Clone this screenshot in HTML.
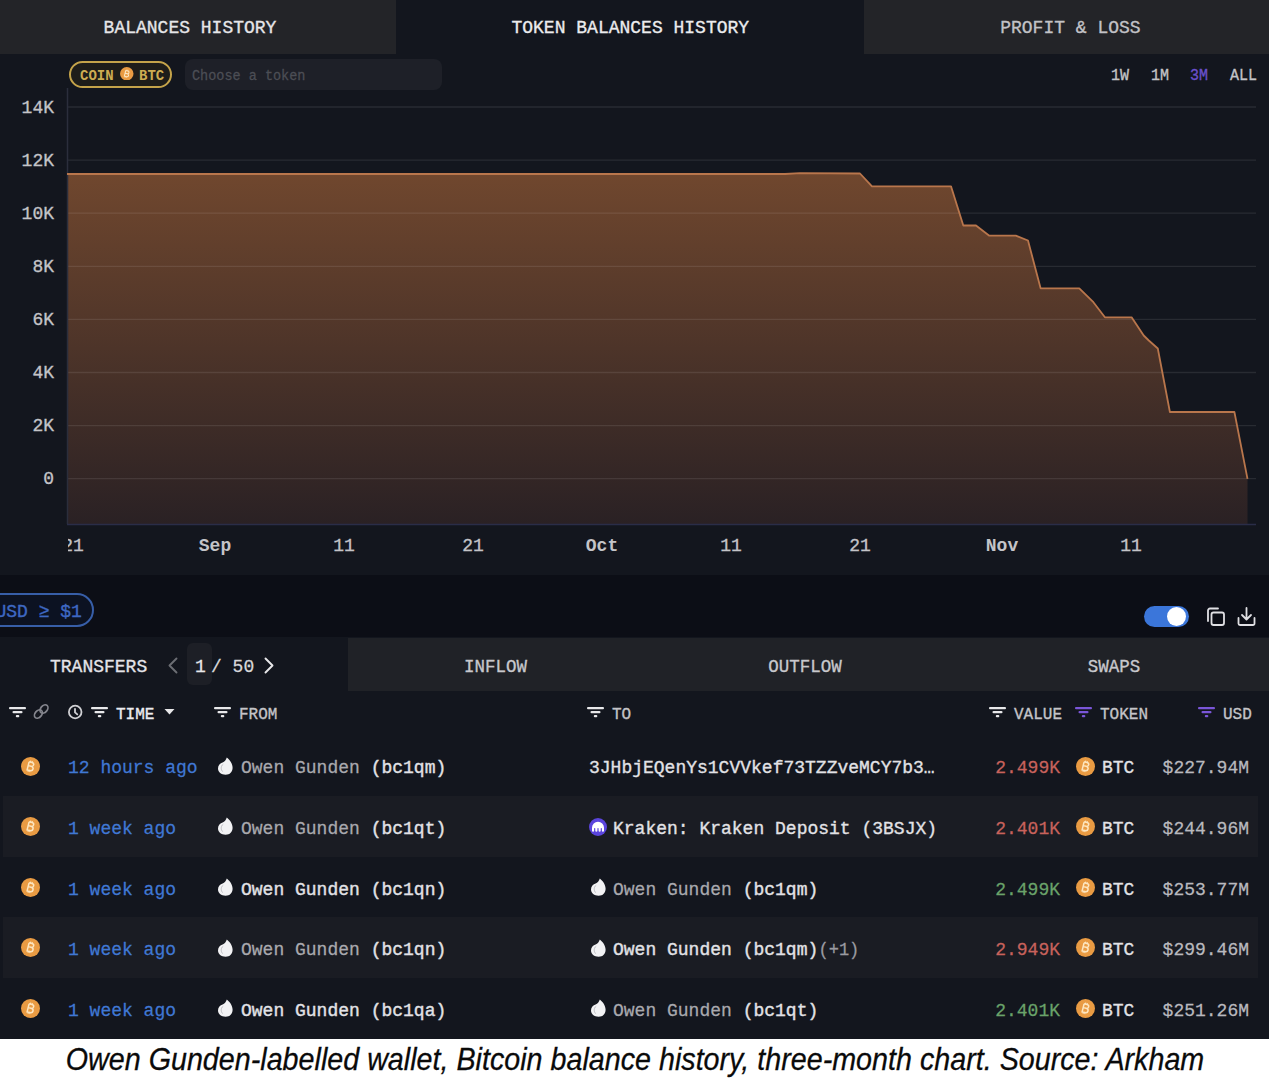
<!DOCTYPE html>
<html><head><meta charset="utf-8"><style>
html,body{margin:0;padding:0}
body{width:1270px;height:1092px;background:#ffffff;position:relative;overflow:hidden;font-family:"Liberation Mono",monospace}
body>div{position:absolute}
.t{white-space:pre;line-height:normal}
</style></head><body>
<div style="left:0px;top:0px;width:1269px;height:1039px;background:#13161e;"></div>
<div style="left:0px;top:0px;width:396px;height:54px;background:#232428;"></div>
<div style="left:864px;top:0px;width:405px;height:54px;background:#232428;"></div>
<div class="t" style="left:-410px;width:1200px;text-align:center;top:18.31px;font-size:18px;color:#e6e6e8;font-weight:400;font-family:'Liberation Mono',monospace;-webkit-text-stroke-width:0.32px;transform:scaleY(1.05);transform-origin:0 14.99px;">BALANCES HISTORY</div>
<div class="t" style="left:30.299999999999955px;width:1200px;text-align:center;top:18.01px;font-size:18px;color:#ececee;font-weight:400;font-family:'Liberation Mono',monospace;-webkit-text-stroke-width:0.32px;transform:scaleY(1.05);transform-origin:0 14.99px;">TOKEN BALANCES HISTORY</div>
<div class="t" style="left:470.4000000000001px;width:1200px;text-align:center;top:18.31px;font-size:18px;color:#c2c2c6;font-weight:400;font-family:'Liberation Mono',monospace;-webkit-text-stroke-width:0.32px;transform:scaleY(1.05);transform-origin:0 14.99px;">PROFIT &amp; LOSS</div>
<div style="left:69px;top:61px;width:99px;height:23px;border:2px solid #c4a34a;border-radius:14px;background:#1e1d1a"></div>
<div class="t" style="left:80px;top:68.14px;font-size:14px;color:#cdac52;font-weight:700;font-family:'Liberation Mono',monospace;-webkit-text-stroke-width:0px;transform:scaleY(1.05);transform-origin:0 11.66px;">COIN</div>
<svg width="13.5" height="13.5" style="position:absolute;left:120.05px;top:66.95px" viewBox="0 0 20 20"><circle cx="10" cy="10" r="10" fill="#e99b43"/><g transform="rotate(14 10 10)"><path d="M7.4 5.6 H10.6 C12 5.6 12.8 6.4 12.8 7.6 C12.8 8.8 12 9.7 10.6 9.7 H7.4 M10.6 9.7 C12.2 9.7 13.2 10.6 13.2 11.9 C13.2 13.3 12.2 14.3 10.6 14.3 H7.4 V5.6" fill="none" stroke="#fde6c0" stroke-width="1.6"/><path d="M8.8 4 V5.6 M10.6 4 V5.6 M8.8 14.3 V16 M10.6 14.3 V16" stroke="#fde6c0" stroke-width="1.1"/></g></svg>
<div class="t" style="left:139px;top:68.14px;font-size:14px;color:#cdac52;font-weight:700;font-family:'Liberation Mono',monospace;-webkit-text-stroke-width:0px;transform:scaleY(1.05);transform-origin:0 11.66px;">BTC</div>
<div style="left:185px;top:59px;width:257px;height:31px;border-radius:8px;background:#1e2028"></div>
<div class="t" style="left:192px;top:68.56px;font-size:13.5px;color:#4c4e55;font-weight:400;font-family:'Liberation Mono',monospace;-webkit-text-stroke-width:0.25px;transform:scaleY(1.05);transform-origin:0 11.24px;">Choose a token</div>
<div class="t" style="left:1111px;top:68.31px;font-size:15px;color:#c4c4c8;font-weight:400;font-family:'Liberation Mono',monospace;-webkit-text-stroke-width:0.32px;transform:scaleY(1.05);transform-origin:0 12.49px;">1W</div>
<div class="t" style="left:1151px;top:68.31px;font-size:15px;color:#c4c4c8;font-weight:400;font-family:'Liberation Mono',monospace;-webkit-text-stroke-width:0.32px;transform:scaleY(1.05);transform-origin:0 12.49px;">1M</div>
<div class="t" style="left:1190px;top:68.31px;font-size:15px;color:#6a50cc;font-weight:400;font-family:'Liberation Mono',monospace;-webkit-text-stroke-width:0.32px;transform:scaleY(1.05);transform-origin:0 12.49px;">3M</div>
<div class="t" style="left:1230px;top:68.31px;font-size:15px;color:#c4c4c8;font-weight:400;font-family:'Liberation Mono',monospace;-webkit-text-stroke-width:0.32px;transform:scaleY(1.05);transform-origin:0 12.49px;">ALL</div>
<svg width="1269" height="575" style="position:absolute;left:0;top:0">
<defs><linearGradient id="g" x1="0" y1="173" x2="0" y2="524" gradientUnits="userSpaceOnUse"><stop offset="0" stop-color="#70472e"/><stop offset="1" stop-color="#2a2124"/></linearGradient></defs>
<path d="M67,174 L785,174 L800,173.2 L860,173.5 L872,186.3 L951,186.3 L963.3,225.5 L976,225.5 L989.3,235.7 L1015.8,235.7 L1028,240.5 L1040.6,288.3 L1079.3,288.3 L1093.4,302.2 L1104.9,317.3 L1131.6,317.3 L1143.7,335.5 L1148.8,340.5 L1157.8,348.5 L1169.9,412 L1234.4,412 L1247.5,478.8 L1247.5,524 L67,524 Z" fill="url(#g)"/>
<line x1="67" y1="107.0" x2="1256" y2="107.0" stroke="#ffffff" stroke-opacity="0.09" stroke-width="1.3"/>
<line x1="67" y1="160.1" x2="1256" y2="160.1" stroke="#ffffff" stroke-opacity="0.09" stroke-width="1.3"/>
<line x1="67" y1="213.2" x2="1256" y2="213.2" stroke="#ffffff" stroke-opacity="0.09" stroke-width="1.3"/>
<line x1="67" y1="266.3" x2="1256" y2="266.3" stroke="#ffffff" stroke-opacity="0.09" stroke-width="1.3"/>
<line x1="67" y1="319.4" x2="1256" y2="319.4" stroke="#ffffff" stroke-opacity="0.09" stroke-width="1.3"/>
<line x1="67" y1="372.5" x2="1256" y2="372.5" stroke="#ffffff" stroke-opacity="0.09" stroke-width="1.3"/>
<line x1="67" y1="425.6" x2="1256" y2="425.6" stroke="#ffffff" stroke-opacity="0.09" stroke-width="1.3"/>
<line x1="67" y1="478.7" x2="1256" y2="478.7" stroke="#ffffff" stroke-opacity="0.09" stroke-width="1.3"/>
<line x1="67.5" y1="88" x2="67.5" y2="524" stroke="#2b2e3c" stroke-width="1.5"/>
<line x1="67" y1="524.5" x2="1256" y2="524.5" stroke="#2a2d48" stroke-width="1.5"/>
<path d="M67,174 L785,174 L800,173.2 L860,173.5 L872,186.3 L951,186.3 L963.3,225.5 L976,225.5 L989.3,235.7 L1015.8,235.7 L1028,240.5 L1040.6,288.3 L1079.3,288.3 L1093.4,302.2 L1104.9,317.3 L1131.6,317.3 L1143.7,335.5 L1148.8,340.5 L1157.8,348.5 L1169.9,412 L1234.4,412 L1247.5,478.8" fill="none" stroke="#b9764c" stroke-width="1.8" stroke-linejoin="round"/>
</svg>
<div class="t" style="left:-1146px;width:1200px;text-align:right;top:97.51px;font-size:18px;color:#c4c4c8;font-weight:400;font-family:'Liberation Mono',monospace;-webkit-text-stroke-width:0.32px;transform:scaleY(1.05);transform-origin:0 14.99px;">14K</div>
<div class="t" style="left:-1146px;width:1200px;text-align:right;top:150.61px;font-size:18px;color:#c4c4c8;font-weight:400;font-family:'Liberation Mono',monospace;-webkit-text-stroke-width:0.32px;transform:scaleY(1.05);transform-origin:0 14.99px;">12K</div>
<div class="t" style="left:-1146px;width:1200px;text-align:right;top:203.71px;font-size:18px;color:#c4c4c8;font-weight:400;font-family:'Liberation Mono',monospace;-webkit-text-stroke-width:0.32px;transform:scaleY(1.05);transform-origin:0 14.99px;">10K</div>
<div class="t" style="left:-1146px;width:1200px;text-align:right;top:256.81px;font-size:18px;color:#c4c4c8;font-weight:400;font-family:'Liberation Mono',monospace;-webkit-text-stroke-width:0.32px;transform:scaleY(1.05);transform-origin:0 14.99px;">8K</div>
<div class="t" style="left:-1146px;width:1200px;text-align:right;top:309.91px;font-size:18px;color:#c4c4c8;font-weight:400;font-family:'Liberation Mono',monospace;-webkit-text-stroke-width:0.32px;transform:scaleY(1.05);transform-origin:0 14.99px;">6K</div>
<div class="t" style="left:-1146px;width:1200px;text-align:right;top:363.01px;font-size:18px;color:#c4c4c8;font-weight:400;font-family:'Liberation Mono',monospace;-webkit-text-stroke-width:0.32px;transform:scaleY(1.05);transform-origin:0 14.99px;">4K</div>
<div class="t" style="left:-1146px;width:1200px;text-align:right;top:416.11px;font-size:18px;color:#c4c4c8;font-weight:400;font-family:'Liberation Mono',monospace;-webkit-text-stroke-width:0.32px;transform:scaleY(1.05);transform-origin:0 14.99px;">2K</div>
<div class="t" style="left:-1146px;width:1200px;text-align:right;top:469.21px;font-size:18px;color:#c4c4c8;font-weight:400;font-family:'Liberation Mono',monospace;-webkit-text-stroke-width:0.32px;transform:scaleY(1.05);transform-origin:0 14.99px;">0</div>
<div class="t" style="left:-527px;width:1200px;text-align:center;top:536.21px;font-size:18px;color:#c4c4c8;font-weight:400;font-family:'Liberation Mono',monospace;-webkit-text-stroke-width:0.32px;transform:scaleY(1.05);transform-origin:0 14.99px;">21</div>
<div class="t" style="left:-385px;width:1200px;text-align:center;top:536.21px;font-size:18px;color:#c4c4c8;font-weight:700;font-family:'Liberation Mono',monospace;-webkit-text-stroke-width:0px;transform:scaleY(1.05);transform-origin:0 14.99px;">Sep</div>
<div class="t" style="left:-256px;width:1200px;text-align:center;top:536.21px;font-size:18px;color:#c4c4c8;font-weight:400;font-family:'Liberation Mono',monospace;-webkit-text-stroke-width:0.32px;transform:scaleY(1.05);transform-origin:0 14.99px;">11</div>
<div class="t" style="left:-127px;width:1200px;text-align:center;top:536.21px;font-size:18px;color:#c4c4c8;font-weight:400;font-family:'Liberation Mono',monospace;-webkit-text-stroke-width:0.32px;transform:scaleY(1.05);transform-origin:0 14.99px;">21</div>
<div class="t" style="left:2px;width:1200px;text-align:center;top:536.21px;font-size:18px;color:#c4c4c8;font-weight:700;font-family:'Liberation Mono',monospace;-webkit-text-stroke-width:0px;transform:scaleY(1.05);transform-origin:0 14.99px;">Oct</div>
<div class="t" style="left:131px;width:1200px;text-align:center;top:536.21px;font-size:18px;color:#c4c4c8;font-weight:400;font-family:'Liberation Mono',monospace;-webkit-text-stroke-width:0.32px;transform:scaleY(1.05);transform-origin:0 14.99px;">11</div>
<div class="t" style="left:260px;width:1200px;text-align:center;top:536.21px;font-size:18px;color:#c4c4c8;font-weight:400;font-family:'Liberation Mono',monospace;-webkit-text-stroke-width:0.32px;transform:scaleY(1.05);transform-origin:0 14.99px;">21</div>
<div class="t" style="left:402px;width:1200px;text-align:center;top:536.21px;font-size:18px;color:#c4c4c8;font-weight:700;font-family:'Liberation Mono',monospace;-webkit-text-stroke-width:0px;transform:scaleY(1.05);transform-origin:0 14.99px;">Nov</div>
<div class="t" style="left:531px;width:1200px;text-align:center;top:536.21px;font-size:18px;color:#c4c4c8;font-weight:400;font-family:'Liberation Mono',monospace;-webkit-text-stroke-width:0.32px;transform:scaleY(1.05);transform-origin:0 14.99px;">11</div>
<div style="left:0px;top:530px;width:68px;height:30px;background:#13161e;"></div>
<div style="left:0px;top:575px;width:1269px;height:62px;background:#0c0e16;"></div>
<div style="left:-30px;top:593px;width:120px;height:30px;border:2px solid #375ea8;border-radius:17px;background:#0c1222"></div>
<div class="t" style="left:0px;top:602.01px;font-size:18px;color:#3e68c2;font-weight:400;font-family:'Liberation Mono',monospace;-webkit-text-stroke-width:0.38px;transform:scaleY(1.05);transform-origin:0 14.99px;left:-4.5px">USD &ge; $1</div>
<div style="left:1144px;top:606px;width:45px;height:21px;border-radius:11px;background:#3b76da"></div>
<div style="left:1166.5px;top:607px;width:19px;height:19px;border-radius:50%;background:#fff"></div>
<svg width="60" height="30" style="position:absolute;left:1200px;top:602px" fill="none" stroke="#e0e0e4" stroke-width="1.8" stroke-linecap="round" stroke-linejoin="round">
<rect x="11.5" y="10.5" width="12.5" height="12.5" rx="2"/>
<path d="M8 19 V8.5 a2 2 0 0 1 2 -2 H18"/>
<path d="M46.5 6 V17 M42 13 L46.5 17.5 L51 13"/>
<path d="M38.5 16 V21.5 a1.5 1.5 0 0 0 1.5 1.5 H53 a1.5 1.5 0 0 0 1.5 -1.5 V16"/>
</svg>
<div style="left:348px;top:638px;width:921px;height:53px;background:#202227;"></div>
<div class="t" style="left:50px;top:657.01px;font-size:18px;color:#e4e4e8;font-weight:400;font-family:'Liberation Mono',monospace;-webkit-text-stroke-width:0.32px;transform:scaleY(1.05);transform-origin:0 14.99px;">TRANSFERS</div>
<svg width="12" height="18" style="position:absolute;left:167px;top:657px" fill="none" stroke="#6c6e74" stroke-width="1.9" stroke-linecap="round" stroke-linejoin="round"><path d="M9.5 1.5 L2.5 8.5 L9.5 15.5"/></svg>
<div style="left:187px;top:643px;width:25px;height:42px;border-radius:6px;background:#1d1f26"></div>
<div class="t" style="left:195px;top:657.01px;font-size:18px;color:#e8e8ea;font-weight:400;font-family:'Liberation Mono',monospace;-webkit-text-stroke-width:0.25px;transform:scaleY(1.05);transform-origin:0 14.99px;">1</div>
<div class="t" style="left:211px;top:657.01px;font-size:18px;color:#d8d8da;font-weight:400;font-family:'Liberation Mono',monospace;-webkit-text-stroke-width:0.25px;transform:scaleY(1.05);transform-origin:0 14.99px;">/ 50</div>
<svg width="12" height="18" style="position:absolute;left:263px;top:657px" fill="none" stroke="#e8e8ea" stroke-width="1.9" stroke-linecap="round" stroke-linejoin="round"><path d="M2.5 1.5 L9.5 8.5 L2.5 15.5"/></svg>
<div class="t" style="left:-104.5px;width:1200px;text-align:center;top:657.43px;font-size:17.5px;color:#c8c8cc;font-weight:400;font-family:'Liberation Mono',monospace;-webkit-text-stroke-width:0.32px;transform:scaleY(1.05);transform-origin:0 14.57px;">INFLOW</div>
<div class="t" style="left:205px;width:1200px;text-align:center;top:657.43px;font-size:17.5px;color:#c8c8cc;font-weight:400;font-family:'Liberation Mono',monospace;-webkit-text-stroke-width:0.32px;transform:scaleY(1.05);transform-origin:0 14.57px;">OUTFLOW</div>
<div class="t" style="left:514px;width:1200px;text-align:center;top:657.43px;font-size:17.5px;color:#c8c8cc;font-weight:400;font-family:'Liberation Mono',monospace;-webkit-text-stroke-width:0.32px;transform:scaleY(1.05);transform-origin:0 14.57px;">SWAPS</div>
<svg width="18" height="12" style="position:absolute;left:9px;top:707px" fill="#e8e8ea"><rect x="0" y="0" width="17" height="2.2" rx="1"/><rect x="3.5" y="4" width="10" height="2.2" rx="1"/><rect x="6.8" y="8" width="3.5" height="2.2" rx="1"/></svg>
<svg width="22" height="22" style="position:absolute;left:30px;top:701px" fill="none" stroke="#85868e" stroke-width="1.7"><ellipse cx="8.4" cy="13" rx="3.3" ry="4.7" transform="rotate(40 8.4 13)"/><ellipse cx="14" cy="8" rx="3.3" ry="4.7" transform="rotate(40 14 8)"/></svg>
<svg width="16" height="16" style="position:absolute;left:67px;top:704px" fill="none" stroke="#d0d0d4" stroke-width="1.8" stroke-linecap="round"><circle cx="8.2" cy="8" r="6.3"/><path d="M8 4.8 V8.3 L10.3 10.4"/></svg>
<svg width="18" height="12" style="position:absolute;left:91px;top:707px" fill="#e8e8ea"><rect x="0" y="0" width="17" height="2.2" rx="1"/><rect x="3.5" y="4" width="10" height="2.2" rx="1"/><rect x="6.8" y="8" width="3.5" height="2.2" rx="1"/></svg>
<div class="t" style="left:116px;top:705.68px;font-size:16px;color:#ececf0;font-weight:400;font-family:'Liberation Mono',monospace;-webkit-text-stroke-width:0.38px;transform:scaleY(1.05);transform-origin:0 13.32px;">TIME</div>
<svg width="12" height="8" style="position:absolute;left:164px;top:708px"><path d="M0.5 1 L10.5 1 L5.5 6.5 Z" fill="#e8e8ea"/></svg>
<svg width="18" height="12" style="position:absolute;left:214px;top:707px" fill="#e8e8ea"><rect x="0" y="0" width="17" height="2.2" rx="1"/><rect x="3.5" y="4" width="10" height="2.2" rx="1"/><rect x="6.8" y="8" width="3.5" height="2.2" rx="1"/></svg>
<div class="t" style="left:239px;top:705.68px;font-size:16px;color:#c4c4c8;font-weight:400;font-family:'Liberation Mono',monospace;-webkit-text-stroke-width:0.32px;transform:scaleY(1.05);transform-origin:0 13.32px;">FROM</div>
<svg width="18" height="12" style="position:absolute;left:587px;top:707px" fill="#e8e8ea"><rect x="0" y="0" width="17" height="2.2" rx="1"/><rect x="3.5" y="4" width="10" height="2.2" rx="1"/><rect x="6.8" y="8" width="3.5" height="2.2" rx="1"/></svg>
<div class="t" style="left:612px;top:705.68px;font-size:16px;color:#c4c4c8;font-weight:400;font-family:'Liberation Mono',monospace;-webkit-text-stroke-width:0.32px;transform:scaleY(1.05);transform-origin:0 13.32px;">TO</div>
<svg width="18" height="12" style="position:absolute;left:989px;top:707px" fill="#e8e8ea"><rect x="0" y="0" width="17" height="2.2" rx="1"/><rect x="3.5" y="4" width="10" height="2.2" rx="1"/><rect x="6.8" y="8" width="3.5" height="2.2" rx="1"/></svg>
<div class="t" style="left:1014px;top:705.68px;font-size:16px;color:#c4c4c8;font-weight:400;font-family:'Liberation Mono',monospace;-webkit-text-stroke-width:0.32px;transform:scaleY(1.05);transform-origin:0 13.32px;">VALUE</div>
<svg width="18" height="12" style="position:absolute;left:1075px;top:707px" fill="#7a56d8"><rect x="0" y="0" width="17" height="2.2" rx="1"/><rect x="3.5" y="4" width="10" height="2.2" rx="1"/><rect x="6.8" y="8" width="3.5" height="2.2" rx="1"/></svg>
<div class="t" style="left:1100px;top:705.68px;font-size:16px;color:#c4c4c8;font-weight:400;font-family:'Liberation Mono',monospace;-webkit-text-stroke-width:0.32px;transform:scaleY(1.05);transform-origin:0 13.32px;">TOKEN</div>
<svg width="18" height="12" style="position:absolute;left:1198px;top:707px" fill="#7a56d8"><rect x="0" y="0" width="17" height="2.2" rx="1"/><rect x="3.5" y="4" width="10" height="2.2" rx="1"/><rect x="6.8" y="8" width="3.5" height="2.2" rx="1"/></svg>
<div class="t" style="left:1223px;top:705.68px;font-size:16px;color:#c4c4c8;font-weight:400;font-family:'Liberation Mono',monospace;-webkit-text-stroke-width:0.32px;transform:scaleY(1.05);transform-origin:0 13.32px;">USD</div>
<div style="left:3px;top:796px;width:1255px;height:61px;background:#1a1c23;"></div>
<div style="left:3px;top:917px;width:1255px;height:61px;background:#1a1c23;"></div>
<svg width="19" height="19" style="position:absolute;left:21.2px;top:756.5px" viewBox="0 0 20 20"><circle cx="10" cy="10" r="10" fill="#e99b43"/><g transform="rotate(14 10 10)"><path d="M7.4 5.6 H10.6 C12 5.6 12.8 6.4 12.8 7.6 C12.8 8.8 12 9.7 10.6 9.7 H7.4 M10.6 9.7 C12.2 9.7 13.2 10.6 13.2 11.9 C13.2 13.3 12.2 14.3 10.6 14.3 H7.4 V5.6" fill="none" stroke="#fde6c0" stroke-width="1.6"/><path d="M8.8 4 V5.6 M10.6 4 V5.6 M8.8 14.3 V16 M10.6 14.3 V16" stroke="#fde6c0" stroke-width="1.1"/></g></svg>
<div class="t" style="left:68px;top:758.41px;font-size:18px;color:#4078d4;font-weight:400;font-family:'Liberation Mono',monospace;-webkit-text-stroke-width:0.25px;transform:scaleY(1.05);transform-origin:0 14.99px;">12 hours ago</div>
<svg width="17" height="19" style="position:absolute;left:216.5px;top:757.0px" viewBox="0 0 17 19"><path d="M9.8 0.6 C12.6 2.8 15.6 6.6 15.6 10.8 C15.6 15 12.8 17.8 8.6 17.8 C4.2 17.8 1 15.2 1 11.6 C1 8.4 3.2 6.4 5.6 5.6 C7.6 4.9 8.9 3.2 9.8 0.6 Z" fill="#f2f2f4"/><path d="M6.2 7.2 C3.9 8.8 3.5 12.2 5.6 14.6" stroke="#bdbdc2" stroke-width="1" fill="none"/></svg>
<div class="t" style="left:241px;top:758.41px;font-size:18px;color:#a9a9ae;font-weight:400;font-family:'Liberation Mono',monospace;-webkit-text-stroke-width:0.25px;transform:scaleY(1.05);transform-origin:0 14.99px;white-space:pre"><span style="color:#a9a9ae;-webkit-text-stroke-width:0.25px">Owen Gunden </span><span style="color:#e2e2e6;-webkit-text-stroke-width:0.38px">(bc1qm)</span></div>
<div class="t" style="left:589px;top:758.41px;font-size:18px;color:#e2e2e6;font-weight:400;font-family:'Liberation Mono',monospace;-webkit-text-stroke-width:0.32px;transform:scaleY(1.05);transform-origin:0 14.99px;">3JHbjEQenYs1CVVkef73TZZveMCY7b3…</div>
<div class="t" style="left:-140px;width:1200px;text-align:right;top:758.41px;font-size:18px;color:#c8625c;font-weight:400;font-family:'Liberation Mono',monospace;-webkit-text-stroke-width:0.25px;transform:scaleY(1.05);transform-origin:0 14.99px;">2.499K</div>
<svg width="19" height="19" style="position:absolute;left:1076.0px;top:756.5px" viewBox="0 0 20 20"><circle cx="10" cy="10" r="10" fill="#e99b43"/><g transform="rotate(14 10 10)"><path d="M7.4 5.6 H10.6 C12 5.6 12.8 6.4 12.8 7.6 C12.8 8.8 12 9.7 10.6 9.7 H7.4 M10.6 9.7 C12.2 9.7 13.2 10.6 13.2 11.9 C13.2 13.3 12.2 14.3 10.6 14.3 H7.4 V5.6" fill="none" stroke="#fde6c0" stroke-width="1.6"/><path d="M8.8 4 V5.6 M10.6 4 V5.6 M8.8 14.3 V16 M10.6 14.3 V16" stroke="#fde6c0" stroke-width="1.1"/></g></svg>
<div class="t" style="left:1102px;top:758.41px;font-size:18px;color:#e2e2e6;font-weight:400;font-family:'Liberation Mono',monospace;-webkit-text-stroke-width:0.32px;transform:scaleY(1.05);transform-origin:0 14.99px;">BTC</div>
<div class="t" style="left:49px;width:1200px;text-align:right;top:758.41px;font-size:18px;color:#b9b9be;font-weight:400;font-family:'Liberation Mono',monospace;-webkit-text-stroke-width:0.25px;transform:scaleY(1.05);transform-origin:0 14.99px;">$227.94M</div>
<svg width="19" height="19" style="position:absolute;left:21.2px;top:816.9px" viewBox="0 0 20 20"><circle cx="10" cy="10" r="10" fill="#e99b43"/><g transform="rotate(14 10 10)"><path d="M7.4 5.6 H10.6 C12 5.6 12.8 6.4 12.8 7.6 C12.8 8.8 12 9.7 10.6 9.7 H7.4 M10.6 9.7 C12.2 9.7 13.2 10.6 13.2 11.9 C13.2 13.3 12.2 14.3 10.6 14.3 H7.4 V5.6" fill="none" stroke="#fde6c0" stroke-width="1.6"/><path d="M8.8 4 V5.6 M10.6 4 V5.6 M8.8 14.3 V16 M10.6 14.3 V16" stroke="#fde6c0" stroke-width="1.1"/></g></svg>
<div class="t" style="left:68px;top:818.81px;font-size:18px;color:#4078d4;font-weight:400;font-family:'Liberation Mono',monospace;-webkit-text-stroke-width:0.25px;transform:scaleY(1.05);transform-origin:0 14.99px;">1 week ago</div>
<svg width="17" height="19" style="position:absolute;left:216.5px;top:817.4px" viewBox="0 0 17 19"><path d="M9.8 0.6 C12.6 2.8 15.6 6.6 15.6 10.8 C15.6 15 12.8 17.8 8.6 17.8 C4.2 17.8 1 15.2 1 11.6 C1 8.4 3.2 6.4 5.6 5.6 C7.6 4.9 8.9 3.2 9.8 0.6 Z" fill="#f2f2f4"/><path d="M6.2 7.2 C3.9 8.8 3.5 12.2 5.6 14.6" stroke="#bdbdc2" stroke-width="1" fill="none"/></svg>
<div class="t" style="left:241px;top:818.81px;font-size:18px;color:#a9a9ae;font-weight:400;font-family:'Liberation Mono',monospace;-webkit-text-stroke-width:0.25px;transform:scaleY(1.05);transform-origin:0 14.99px;white-space:pre"><span style="color:#a9a9ae;-webkit-text-stroke-width:0.25px">Owen Gunden </span><span style="color:#e2e2e6;-webkit-text-stroke-width:0.38px">(bc1qt)</span></div>
<svg width="18" height="18" style="position:absolute;left:588.8px;top:817.6999999999999px" viewBox="0 0 18 18"><circle cx="9" cy="9" r="9" fill="#5b45dd"/><path d="M3 12.8 V9.8 A6 6 0 0 1 15 9.8 V12.8 a1.05 1.05 0 0 1 -2.1 0 V10.6 a0.6 0.6 0 0 0 -1.2 0 V12.8 a1.05 1.05 0 0 1 -2.1 0 V10.6 a0.6 0.6 0 0 0 -1.2 0 V12.8 a1.05 1.05 0 0 1 -2.1 0 V10.6 a0.6 0.6 0 0 0 -1.2 0 V12.8 a1.05 1.05 0 0 1 -2.1 0 Z" fill="#fff"/></svg>
<div class="t" style="left:613px;top:818.81px;font-size:18px;color:#e2e2e6;font-weight:400;font-family:'Liberation Mono',monospace;-webkit-text-stroke-width:0.32px;transform:scaleY(1.05);transform-origin:0 14.99px;">Kraken: Kraken Deposit (3BSJX)</div>
<div class="t" style="left:-140px;width:1200px;text-align:right;top:818.81px;font-size:18px;color:#c8625c;font-weight:400;font-family:'Liberation Mono',monospace;-webkit-text-stroke-width:0.25px;transform:scaleY(1.05);transform-origin:0 14.99px;">2.401K</div>
<svg width="19" height="19" style="position:absolute;left:1076.0px;top:816.9px" viewBox="0 0 20 20"><circle cx="10" cy="10" r="10" fill="#e99b43"/><g transform="rotate(14 10 10)"><path d="M7.4 5.6 H10.6 C12 5.6 12.8 6.4 12.8 7.6 C12.8 8.8 12 9.7 10.6 9.7 H7.4 M10.6 9.7 C12.2 9.7 13.2 10.6 13.2 11.9 C13.2 13.3 12.2 14.3 10.6 14.3 H7.4 V5.6" fill="none" stroke="#fde6c0" stroke-width="1.6"/><path d="M8.8 4 V5.6 M10.6 4 V5.6 M8.8 14.3 V16 M10.6 14.3 V16" stroke="#fde6c0" stroke-width="1.1"/></g></svg>
<div class="t" style="left:1102px;top:818.81px;font-size:18px;color:#e2e2e6;font-weight:400;font-family:'Liberation Mono',monospace;-webkit-text-stroke-width:0.32px;transform:scaleY(1.05);transform-origin:0 14.99px;">BTC</div>
<div class="t" style="left:49px;width:1200px;text-align:right;top:818.81px;font-size:18px;color:#b9b9be;font-weight:400;font-family:'Liberation Mono',monospace;-webkit-text-stroke-width:0.25px;transform:scaleY(1.05);transform-origin:0 14.99px;">$244.96M</div>
<svg width="19" height="19" style="position:absolute;left:21.2px;top:877.6px" viewBox="0 0 20 20"><circle cx="10" cy="10" r="10" fill="#e99b43"/><g transform="rotate(14 10 10)"><path d="M7.4 5.6 H10.6 C12 5.6 12.8 6.4 12.8 7.6 C12.8 8.8 12 9.7 10.6 9.7 H7.4 M10.6 9.7 C12.2 9.7 13.2 10.6 13.2 11.9 C13.2 13.3 12.2 14.3 10.6 14.3 H7.4 V5.6" fill="none" stroke="#fde6c0" stroke-width="1.6"/><path d="M8.8 4 V5.6 M10.6 4 V5.6 M8.8 14.3 V16 M10.6 14.3 V16" stroke="#fde6c0" stroke-width="1.1"/></g></svg>
<div class="t" style="left:68px;top:879.51px;font-size:18px;color:#4078d4;font-weight:400;font-family:'Liberation Mono',monospace;-webkit-text-stroke-width:0.25px;transform:scaleY(1.05);transform-origin:0 14.99px;">1 week ago</div>
<svg width="17" height="19" style="position:absolute;left:216.5px;top:878.1px" viewBox="0 0 17 19"><path d="M9.8 0.6 C12.6 2.8 15.6 6.6 15.6 10.8 C15.6 15 12.8 17.8 8.6 17.8 C4.2 17.8 1 15.2 1 11.6 C1 8.4 3.2 6.4 5.6 5.6 C7.6 4.9 8.9 3.2 9.8 0.6 Z" fill="#f2f2f4"/><path d="M6.2 7.2 C3.9 8.8 3.5 12.2 5.6 14.6" stroke="#bdbdc2" stroke-width="1" fill="none"/></svg>
<div class="t" style="left:241px;top:879.51px;font-size:18px;color:#a9a9ae;font-weight:400;font-family:'Liberation Mono',monospace;-webkit-text-stroke-width:0.25px;transform:scaleY(1.05);transform-origin:0 14.99px;white-space:pre"><span style="color:#e2e2e6;-webkit-text-stroke-width:0.38px">Owen Gunden </span><span style="color:#e2e2e6;-webkit-text-stroke-width:0.38px">(bc1qn)</span></div>
<svg width="17" height="19" style="position:absolute;left:589.5px;top:878.1px" viewBox="0 0 17 19"><path d="M9.8 0.6 C12.6 2.8 15.6 6.6 15.6 10.8 C15.6 15 12.8 17.8 8.6 17.8 C4.2 17.8 1 15.2 1 11.6 C1 8.4 3.2 6.4 5.6 5.6 C7.6 4.9 8.9 3.2 9.8 0.6 Z" fill="#f2f2f4"/><path d="M6.2 7.2 C3.9 8.8 3.5 12.2 5.6 14.6" stroke="#bdbdc2" stroke-width="1" fill="none"/></svg>
<div class="t" style="left:613px;top:879.51px;font-size:18px;color:#a9a9ae;font-weight:400;font-family:'Liberation Mono',monospace;-webkit-text-stroke-width:0.25px;transform:scaleY(1.05);transform-origin:0 14.99px;white-space:pre"><span style="color:#a9a9ae;-webkit-text-stroke-width:0.25px">Owen Gunden </span><span style="color:#e2e2e6;-webkit-text-stroke-width:0.38px">(bc1qm)</span></div>
<div class="t" style="left:-140px;width:1200px;text-align:right;top:879.51px;font-size:18px;color:#6aa36a;font-weight:400;font-family:'Liberation Mono',monospace;-webkit-text-stroke-width:0.25px;transform:scaleY(1.05);transform-origin:0 14.99px;">2.499K</div>
<svg width="19" height="19" style="position:absolute;left:1076.0px;top:877.6px" viewBox="0 0 20 20"><circle cx="10" cy="10" r="10" fill="#e99b43"/><g transform="rotate(14 10 10)"><path d="M7.4 5.6 H10.6 C12 5.6 12.8 6.4 12.8 7.6 C12.8 8.8 12 9.7 10.6 9.7 H7.4 M10.6 9.7 C12.2 9.7 13.2 10.6 13.2 11.9 C13.2 13.3 12.2 14.3 10.6 14.3 H7.4 V5.6" fill="none" stroke="#fde6c0" stroke-width="1.6"/><path d="M8.8 4 V5.6 M10.6 4 V5.6 M8.8 14.3 V16 M10.6 14.3 V16" stroke="#fde6c0" stroke-width="1.1"/></g></svg>
<div class="t" style="left:1102px;top:879.51px;font-size:18px;color:#e2e2e6;font-weight:400;font-family:'Liberation Mono',monospace;-webkit-text-stroke-width:0.32px;transform:scaleY(1.05);transform-origin:0 14.99px;">BTC</div>
<div class="t" style="left:49px;width:1200px;text-align:right;top:879.51px;font-size:18px;color:#b9b9be;font-weight:400;font-family:'Liberation Mono',monospace;-webkit-text-stroke-width:0.25px;transform:scaleY(1.05);transform-origin:0 14.99px;">$253.77M</div>
<svg width="19" height="19" style="position:absolute;left:21.2px;top:938.0px" viewBox="0 0 20 20"><circle cx="10" cy="10" r="10" fill="#e99b43"/><g transform="rotate(14 10 10)"><path d="M7.4 5.6 H10.6 C12 5.6 12.8 6.4 12.8 7.6 C12.8 8.8 12 9.7 10.6 9.7 H7.4 M10.6 9.7 C12.2 9.7 13.2 10.6 13.2 11.9 C13.2 13.3 12.2 14.3 10.6 14.3 H7.4 V5.6" fill="none" stroke="#fde6c0" stroke-width="1.6"/><path d="M8.8 4 V5.6 M10.6 4 V5.6 M8.8 14.3 V16 M10.6 14.3 V16" stroke="#fde6c0" stroke-width="1.1"/></g></svg>
<div class="t" style="left:68px;top:939.91px;font-size:18px;color:#4078d4;font-weight:400;font-family:'Liberation Mono',monospace;-webkit-text-stroke-width:0.25px;transform:scaleY(1.05);transform-origin:0 14.99px;">1 week ago</div>
<svg width="17" height="19" style="position:absolute;left:216.5px;top:938.5px" viewBox="0 0 17 19"><path d="M9.8 0.6 C12.6 2.8 15.6 6.6 15.6 10.8 C15.6 15 12.8 17.8 8.6 17.8 C4.2 17.8 1 15.2 1 11.6 C1 8.4 3.2 6.4 5.6 5.6 C7.6 4.9 8.9 3.2 9.8 0.6 Z" fill="#f2f2f4"/><path d="M6.2 7.2 C3.9 8.8 3.5 12.2 5.6 14.6" stroke="#bdbdc2" stroke-width="1" fill="none"/></svg>
<div class="t" style="left:241px;top:939.91px;font-size:18px;color:#a9a9ae;font-weight:400;font-family:'Liberation Mono',monospace;-webkit-text-stroke-width:0.25px;transform:scaleY(1.05);transform-origin:0 14.99px;white-space:pre"><span style="color:#a9a9ae;-webkit-text-stroke-width:0.25px">Owen Gunden </span><span style="color:#e2e2e6;-webkit-text-stroke-width:0.38px">(bc1qn)</span></div>
<svg width="17" height="19" style="position:absolute;left:589.5px;top:938.5px" viewBox="0 0 17 19"><path d="M9.8 0.6 C12.6 2.8 15.6 6.6 15.6 10.8 C15.6 15 12.8 17.8 8.6 17.8 C4.2 17.8 1 15.2 1 11.6 C1 8.4 3.2 6.4 5.6 5.6 C7.6 4.9 8.9 3.2 9.8 0.6 Z" fill="#f2f2f4"/><path d="M6.2 7.2 C3.9 8.8 3.5 12.2 5.6 14.6" stroke="#bdbdc2" stroke-width="1" fill="none"/></svg>
<div class="t" style="left:613px;top:939.91px;font-size:18px;color:#a9a9ae;font-weight:400;font-family:'Liberation Mono',monospace;-webkit-text-stroke-width:0.25px;transform:scaleY(1.05);transform-origin:0 14.99px;white-space:pre"><span style="color:#e2e2e6;-webkit-text-stroke-width:0.38px">Owen Gunden </span><span style="color:#e2e2e6;-webkit-text-stroke-width:0.38px">(bc1qm)</span></div>
<div class="t" style="left:818.5px;top:940.75px;font-size:17px;color:#9a9aa0;font-weight:400;font-family:'Liberation Mono',monospace;-webkit-text-stroke-width:0.25px;transform:scaleY(1.05);transform-origin:0 14.15px;">(+1)</div>
<div class="t" style="left:-140px;width:1200px;text-align:right;top:939.91px;font-size:18px;color:#c8625c;font-weight:400;font-family:'Liberation Mono',monospace;-webkit-text-stroke-width:0.25px;transform:scaleY(1.05);transform-origin:0 14.99px;">2.949K</div>
<svg width="19" height="19" style="position:absolute;left:1076.0px;top:938.0px" viewBox="0 0 20 20"><circle cx="10" cy="10" r="10" fill="#e99b43"/><g transform="rotate(14 10 10)"><path d="M7.4 5.6 H10.6 C12 5.6 12.8 6.4 12.8 7.6 C12.8 8.8 12 9.7 10.6 9.7 H7.4 M10.6 9.7 C12.2 9.7 13.2 10.6 13.2 11.9 C13.2 13.3 12.2 14.3 10.6 14.3 H7.4 V5.6" fill="none" stroke="#fde6c0" stroke-width="1.6"/><path d="M8.8 4 V5.6 M10.6 4 V5.6 M8.8 14.3 V16 M10.6 14.3 V16" stroke="#fde6c0" stroke-width="1.1"/></g></svg>
<div class="t" style="left:1102px;top:939.91px;font-size:18px;color:#e2e2e6;font-weight:400;font-family:'Liberation Mono',monospace;-webkit-text-stroke-width:0.32px;transform:scaleY(1.05);transform-origin:0 14.99px;">BTC</div>
<div class="t" style="left:49px;width:1200px;text-align:right;top:939.91px;font-size:18px;color:#b9b9be;font-weight:400;font-family:'Liberation Mono',monospace;-webkit-text-stroke-width:0.25px;transform:scaleY(1.05);transform-origin:0 14.99px;">$299.46M</div>
<svg width="19" height="19" style="position:absolute;left:21.2px;top:998.6px" viewBox="0 0 20 20"><circle cx="10" cy="10" r="10" fill="#e99b43"/><g transform="rotate(14 10 10)"><path d="M7.4 5.6 H10.6 C12 5.6 12.8 6.4 12.8 7.6 C12.8 8.8 12 9.7 10.6 9.7 H7.4 M10.6 9.7 C12.2 9.7 13.2 10.6 13.2 11.9 C13.2 13.3 12.2 14.3 10.6 14.3 H7.4 V5.6" fill="none" stroke="#fde6c0" stroke-width="1.6"/><path d="M8.8 4 V5.6 M10.6 4 V5.6 M8.8 14.3 V16 M10.6 14.3 V16" stroke="#fde6c0" stroke-width="1.1"/></g></svg>
<div class="t" style="left:68px;top:1000.51px;font-size:18px;color:#4078d4;font-weight:400;font-family:'Liberation Mono',monospace;-webkit-text-stroke-width:0.25px;transform:scaleY(1.05);transform-origin:0 14.99px;">1 week ago</div>
<svg width="17" height="19" style="position:absolute;left:216.5px;top:999.1px" viewBox="0 0 17 19"><path d="M9.8 0.6 C12.6 2.8 15.6 6.6 15.6 10.8 C15.6 15 12.8 17.8 8.6 17.8 C4.2 17.8 1 15.2 1 11.6 C1 8.4 3.2 6.4 5.6 5.6 C7.6 4.9 8.9 3.2 9.8 0.6 Z" fill="#f2f2f4"/><path d="M6.2 7.2 C3.9 8.8 3.5 12.2 5.6 14.6" stroke="#bdbdc2" stroke-width="1" fill="none"/></svg>
<div class="t" style="left:241px;top:1000.51px;font-size:18px;color:#a9a9ae;font-weight:400;font-family:'Liberation Mono',monospace;-webkit-text-stroke-width:0.25px;transform:scaleY(1.05);transform-origin:0 14.99px;white-space:pre"><span style="color:#e2e2e6;-webkit-text-stroke-width:0.38px">Owen Gunden </span><span style="color:#e2e2e6;-webkit-text-stroke-width:0.38px">(bc1qa)</span></div>
<svg width="17" height="19" style="position:absolute;left:589.5px;top:999.1px" viewBox="0 0 17 19"><path d="M9.8 0.6 C12.6 2.8 15.6 6.6 15.6 10.8 C15.6 15 12.8 17.8 8.6 17.8 C4.2 17.8 1 15.2 1 11.6 C1 8.4 3.2 6.4 5.6 5.6 C7.6 4.9 8.9 3.2 9.8 0.6 Z" fill="#f2f2f4"/><path d="M6.2 7.2 C3.9 8.8 3.5 12.2 5.6 14.6" stroke="#bdbdc2" stroke-width="1" fill="none"/></svg>
<div class="t" style="left:613px;top:1000.51px;font-size:18px;color:#a9a9ae;font-weight:400;font-family:'Liberation Mono',monospace;-webkit-text-stroke-width:0.25px;transform:scaleY(1.05);transform-origin:0 14.99px;white-space:pre"><span style="color:#a9a9ae;-webkit-text-stroke-width:0.25px">Owen Gunden </span><span style="color:#e2e2e6;-webkit-text-stroke-width:0.38px">(bc1qt)</span></div>
<div class="t" style="left:-140px;width:1200px;text-align:right;top:1000.51px;font-size:18px;color:#6aa36a;font-weight:400;font-family:'Liberation Mono',monospace;-webkit-text-stroke-width:0.25px;transform:scaleY(1.05);transform-origin:0 14.99px;">2.401K</div>
<svg width="19" height="19" style="position:absolute;left:1076.0px;top:998.6px" viewBox="0 0 20 20"><circle cx="10" cy="10" r="10" fill="#e99b43"/><g transform="rotate(14 10 10)"><path d="M7.4 5.6 H10.6 C12 5.6 12.8 6.4 12.8 7.6 C12.8 8.8 12 9.7 10.6 9.7 H7.4 M10.6 9.7 C12.2 9.7 13.2 10.6 13.2 11.9 C13.2 13.3 12.2 14.3 10.6 14.3 H7.4 V5.6" fill="none" stroke="#fde6c0" stroke-width="1.6"/><path d="M8.8 4 V5.6 M10.6 4 V5.6 M8.8 14.3 V16 M10.6 14.3 V16" stroke="#fde6c0" stroke-width="1.1"/></g></svg>
<div class="t" style="left:1102px;top:1000.51px;font-size:18px;color:#e2e2e6;font-weight:400;font-family:'Liberation Mono',monospace;-webkit-text-stroke-width:0.32px;transform:scaleY(1.05);transform-origin:0 14.99px;">BTC</div>
<div class="t" style="left:49px;width:1200px;text-align:right;top:1000.51px;font-size:18px;color:#b9b9be;font-weight:400;font-family:'Liberation Mono',monospace;-webkit-text-stroke-width:0.25px;transform:scaleY(1.05);transform-origin:0 14.99px;">$251.26M</div>
<div class="t" style="left:35px;width:1200px;text-align:center;top:1043.82px;font-size:28.7px;color:#0a0a0a;font-weight:400;font-family:'Liberation Sans',sans-serif;-webkit-text-stroke-width:0.25px;font-style:italic;transform:scaleY(1.08);transform-origin:50% 88%">Owen Gunden-labelled wallet, Bitcoin balance history, three-month chart. Source: Arkham</div>
</body></html>
